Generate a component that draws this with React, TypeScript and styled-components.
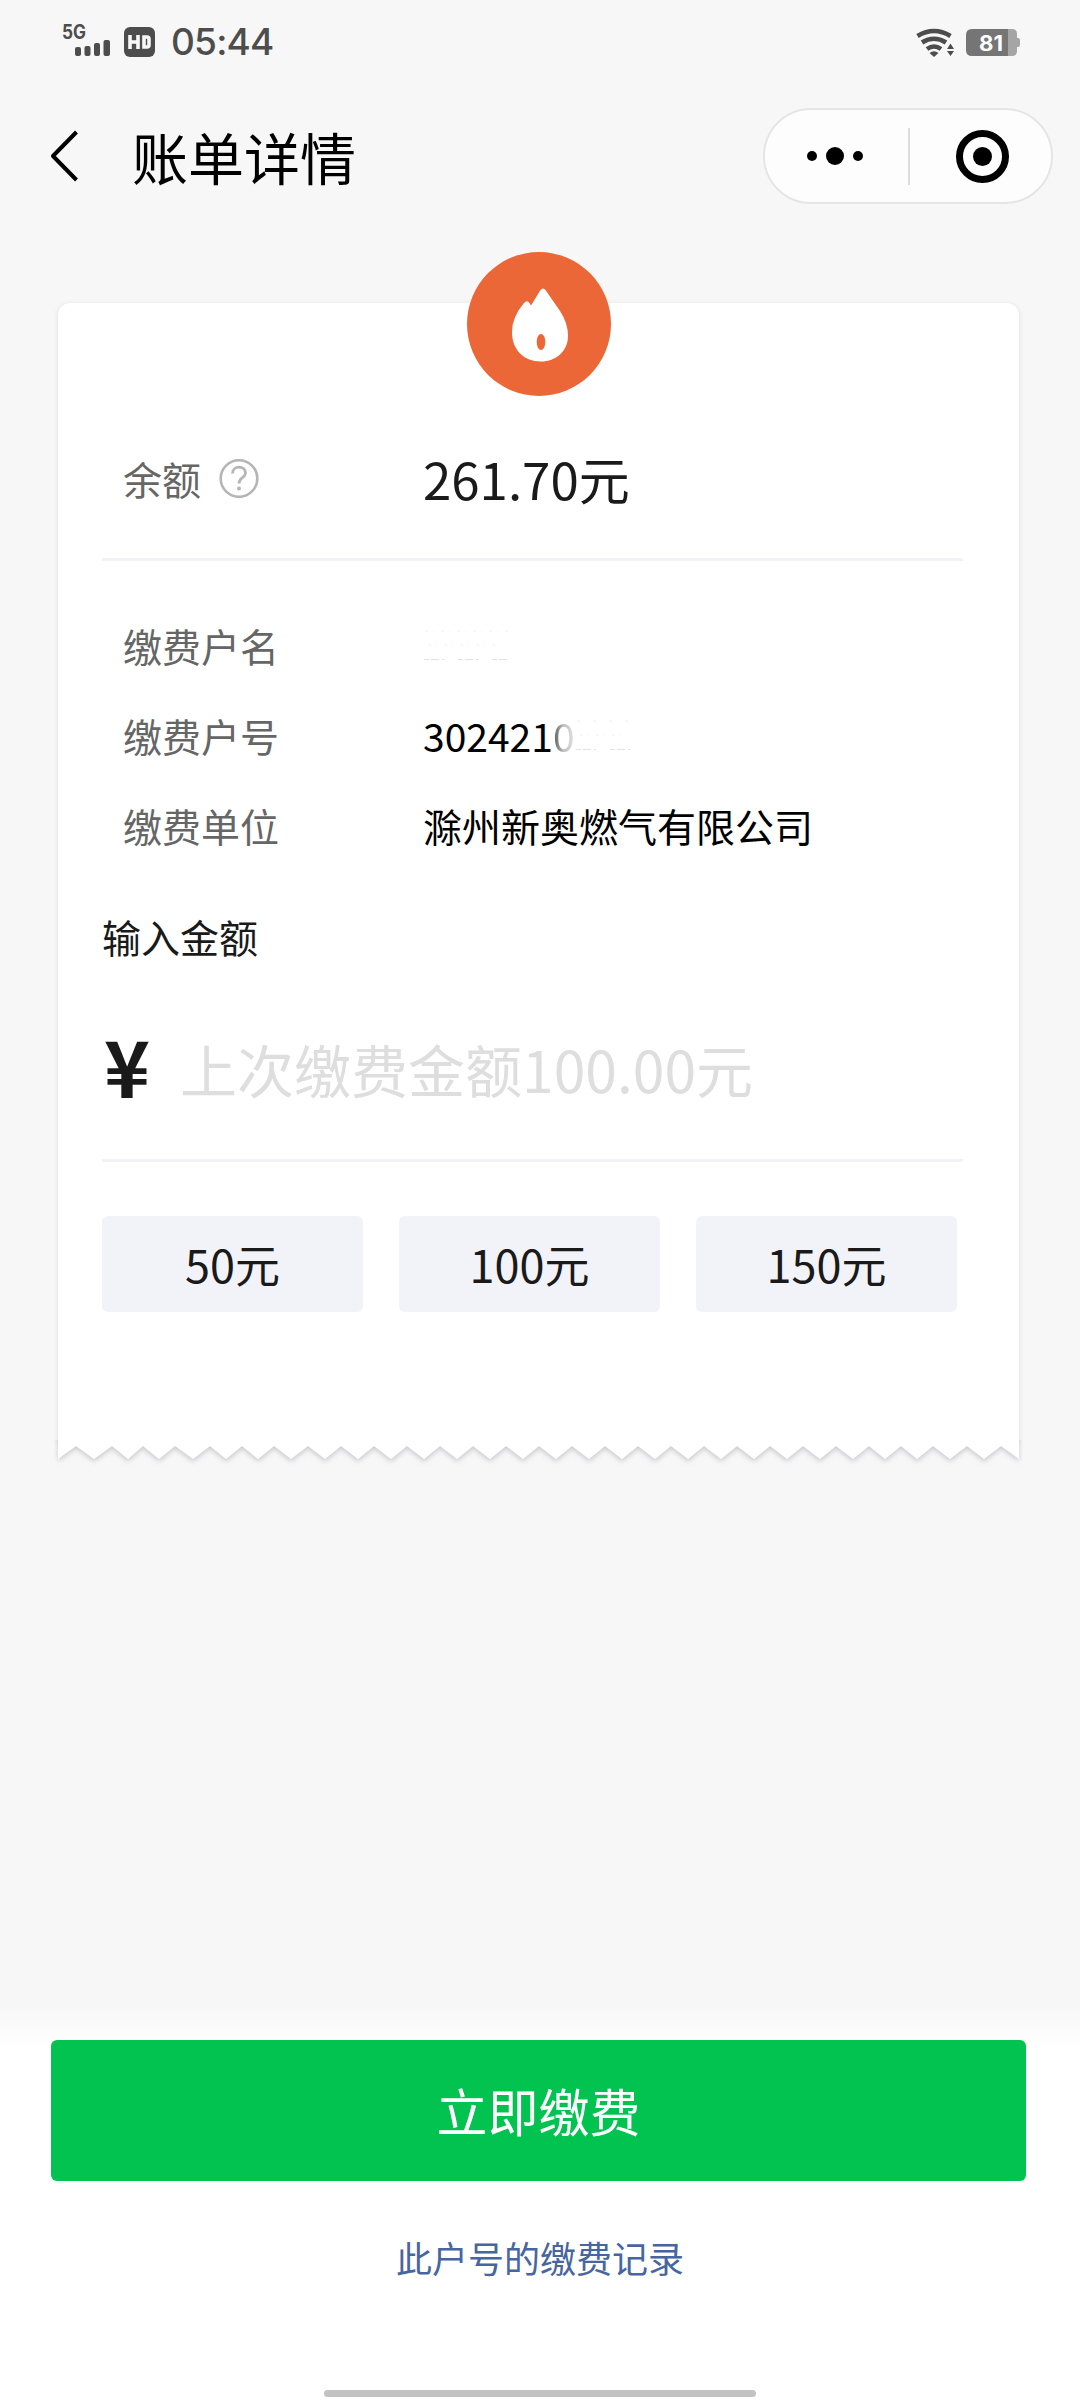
import React from "react";
import styled, { createGlobalStyle } from "styled-components";

const GlobalStyle = createGlobalStyle`
  * { box-sizing: border-box; }
  html, body { margin: 0; padding: 0; background: #f7f7f7; }
  body { font-family: "Noto Sans CJK SC", sans-serif; color: #1a1a1a; }
  button { font: inherit; border: 0; padding: 0; margin: 0; cursor: pointer; }
`;

const Screen = styled.div`
  width: 1080px;
  height: 2400px;
  display: flex;
  flex-direction: column;
  background: #f7f7f7;
  overflow: hidden;
`;

const StatusBar = styled.header`
  height: 84px;
  flex: none;
  display: flex;
  justify-content: space-between;
  padding: 0 60px 0 62px;
`;

const StatusSide = styled.div`
  display: flex;
  align-items: flex-start;
`;

const Clock = styled.span`
  margin-left: 15px;
  padding-top: 18px;
  font: 500 37px/48px Inter, sans-serif;
  letter-spacing: -0.8px;
  color: #4d4d4d;
`;

const NavBar = styled.nav`
  height: 144px;
  flex: none;
  display: flex;
  align-items: center;
  padding: 0 27px 0 48px;
`;

const BackButton = styled.button`
  width: 32px;
  height: 56px;
  background: none;
`;

const Title = styled.h1`
  margin: 0 0 0 52px;
  flex: 1;
  font-size: 56px;
  line-height: 72px;
  font-weight: 400;
  color: #000;
`;

const Capsule = styled.div`
  width: 290px;
  height: 96px;
  border: 2px solid #e5e5e5;
  border-radius: 48px;
  background: #fdfdfd;
  display: flex;
  align-items: center;
`;

const CapsuleDivider = styled.span`
  width: 2px;
  height: 57px;
  background: #dcdcdc;
`;

const CapsuleButton = styled.button<{ $width: number; $inset?: number }>`
  width: ${(p) => p.$width}px;
  height: 92px;
  padding-right: ${(p) => p.$inset ?? 0}px;
  background: none;
  display: flex;
  align-items: center;
  justify-content: center;
`;

const Main = styled.main`
  flex: 1;
  padding: 75px 61px 0 58px;
`;

const Receipt = styled.section`
  position: relative;
  height: 1139px;
  padding: 0 56px 0 44px;
  background: #fff;
  border-radius: 12px 12px 0 0;
  box-shadow: 0 1px 4px rgba(190, 192, 215, 0.5);
  display: flex;
  flex-direction: column;
`;

const TornEdge = styled.svg`
  position: absolute;
  left: -4px;
  top: 1137px;
  width: 969px;
  height: 30px;
  overflow: hidden;
`;

const Badge = styled.div`
  position: absolute;
  left: 409px;
  top: -51px;
  width: 144px;
  height: 144px;
`;

const BalanceRow = styled.div`
  height: 258px;
  padding: 135px 0 0 21px;
  border-bottom: 3px solid #f2f3f8;
  display: flex;
  flex: none;
`;

const BalanceLabel = styled.div`
  width: 300px;
  height: 80px;
  display: flex;
  align-items: center;
  gap: 18px;
  font-size: 39px;
  color: #666;
`;

const Balance = styled.div`
  font-size: 51px;
  line-height: 80px;
`;

const Details = styled.dl`
  margin: 0;
  padding: 39px 0 0 21px;
  display: flex;
  flex-direction: column;
`;

const DetailRow = styled.div`
  display: flex;
  height: 90px;
  align-items: center;
  font-size: 39px;
`;

const DetailLabel = styled.dt`
  width: 300px;
  color: #666;
`;

const DetailValue = styled.dd`
  margin: 0;
  color: #000;
  white-space: nowrap;
  display: flex;
  align-items: center;
`;

const Faded = styled.span`
  color: transparent;
  background: linear-gradient(90deg, #555 0%, #bbb 45%, #e4e4e4 100%);
  background-clip: text;
  -webkit-background-clip: text;
`;

const AmountTitle = styled.h2`
  margin: 36px 0 0;
  font-size: 39px;
  line-height: 60px;
  font-weight: 400;
`;

const AmountField = styled.div`
  height: 196px;
  padding-top: 10px;
  border-bottom: 3px solid #f2f3f8;
  display: flex;
  align-items: center;
  flex: none;
`;

const Currency = styled.span`
  width: 78px;
  padding: 0 0 8px 2px;
  font-size: 78px;
  line-height: 96px;
  font-weight: 700;
`;

const Placeholder = styled.span`
  font-size: 57px;
  line-height: 84px;
  color: #dedede;
  white-space: nowrap;
`;

const Presets = styled.div`
  margin-top: 54px;
  display: grid;
  grid-template-columns: repeat(3, 261px);
  column-gap: 36px;
`;

const Preset = styled.button`
  && { font-size: 45px; line-height: 96px; }
  height: 96px;
  color: #1a1a1a;
  background: #f2f3f8;
  border-radius: 6px;
`;

const Footer = styled.footer`
  height: 420px;
  flex: none;
  padding: 60px 54px 0 51px;
  background: linear-gradient(#f7f7f7 0, #f7f7f7 25px, #fff 72px);
  display: flex;
  flex-direction: column;
  align-items: center;
`;

const PayButton = styled.button`
  && { font-size: 51px; line-height: 141px; }
  width: 100%;
  height: 141px;
  flex: none;
  color: #fff;
  background: #02c250;
  border-radius: 6px;
`;

const HistoryLink = styled.a`
  margin: 49px 0 0 3px;
  font-size: 36px;
  line-height: 54px;
  color: #4766a0;
`;

const HomeIndicator = styled.span`
  margin: 106px 0 0 3px;
  width: 432px;
  height: 7px;
  flex: none;
  border-radius: 4px;
  background: #c2c2c2;
`;

const details = [
  { label: "缴费户名", value: "", faded: "", smudge: 92 },
  { label: "缴费户号", value: "302421", faded: "0", smudge: 66 },
  { label: "缴费单位", value: "滁州新奥燃气有限公司", faded: "", smudge: 0 },
];

const toothPeaks = [76, 112, 143, 175, 210, 242, 274, 308, 341, 374, 407, 440, 473, 506, 539, 572, 605, 638, 671, 704, 737, 770, 803, 836, 869, 901, 933, 967, 1001];
const toothPoints = toothPeaks
  .map((x, i) => {
    const next = toothPeaks[i + 1] ?? 1037;
    const valley = Math.min(1019, Math.round((x + next) / 2));
    return `${x - 54},6 ${valley - 54},19`;
  })
  .join(" ");

function SignalIcon() {
  return (
    <svg width="94" height="60" viewBox="62 0 94 60" fill="#4d4d4d">
      <text x="62" y="39" fontFamily="Inter, sans-serif" fontWeight="700" fontSize="19.500" textLength="24" lengthAdjust="spacingAndGlyphs">5G</text>
      <rect x="75" y="47" width="6" height="9" rx="2" />
      <rect x="84.500" y="46" width="6" height="10" rx="2" />
      <rect x="94" y="43" width="6" height="13" rx="2" />
      <rect x="103.500" y="40" width="6.500" height="16" rx="2" />
      <rect x="124" y="27" width="31" height="30" rx="6" />
      <path d="M130 35v14M138 35v14M130 42h8M144 37h3q2 0 2 2v6q0 2-2 2h-3z" fill="none" stroke="#f7f7f7" strokeWidth="3.600" />
    </svg>
  );
}

function WifiBatteryIcon() {
  return (
    <svg width="105" height="60" viewBox="915 0 105 60">
      <g fill="none" stroke="#4d4d4d" strokeWidth="4.600">
        <path d="M917.500 36Q934 26 950.500 36" />
        <path d="M922 42.500Q934 35 946 42.500" />
        <path d="M927 49Q934 44 941 49" />
      </g>
      <path d="M929.500 53Q934 49.500 938.500 53L934 57Z" fill="#4d4d4d" />
      <path d="M947 49l3.500-5.500 3.500 5.500zM947 51h7l-3.500 5z" fill="#4d4d4d" />
      <path d="M1008 29h4q5 0 5 5v4h1q2 0 2 2v5q0 2-2 2h-1v4q0 5-5 5h-4z" fill="#a5a5a5" />
      <path d="M1008 29v27h-36q-6 0-6-6v-15q0-6 6-6z" fill="#757575" />
      <text x="979" y="50.500" fontFamily="Inter, sans-serif" fontWeight="700" fontSize="21" textLength="24" lengthAdjust="spacingAndGlyphs" fill="#fff">81</text>
    </svg>
  );
}

/* Faint specks left where a value has been wiped out. */
function Smudge({ width }: { width: number }) {
  return (
    <svg width={width} height="32" viewBox={`0 0 ${width} 32`} fill="none" strokeWidth="1">
      <path d={`M2 2H${width - 4}M5 16H${width - 20}`} stroke="#f2f2f2" strokeDasharray="3 5 1 7" />
      <path d={`M1 30.500H${width - 6}`} stroke="#e2e2e2" strokeDasharray="5 2 8 3 2 14" />
    </svg>
  );
}

export default function App() {
  return (
    <>
      <GlobalStyle />
      <Screen>
        <StatusBar>
          <StatusSide>
            <SignalIcon />
            <Clock>05:44</Clock>
          </StatusSide>
          <StatusSide>
            <WifiBatteryIcon />
          </StatusSide>
        </StatusBar>

        <NavBar>
          <BackButton>
            <svg width="32" height="56" viewBox="0 0 32 56" fill="none" stroke="#000" strokeWidth="4">
              <path d="M28.500 4L5 28L28.500 52" strokeLinejoin="round" />
            </svg>
          </BackButton>
          <Title>账单详情</Title>
          <Capsule>
            <CapsuleButton $width={143} $inset={3}>
              <svg width="56" height="18" viewBox="0 0 56 18">
                <circle cx="5" cy="9" r="5" />
                <circle cx="28" cy="9" r="9" />
                <circle cx="51" cy="9" r="5" />
              </svg>
            </CapsuleButton>
            <CapsuleDivider />
            <CapsuleButton $width={141}>
              <svg width="60" height="56" viewBox="0 0 60 56">
                <circle cx="31.500" cy="28.500" r="23" fill="none" stroke="#000" strokeWidth="7" />
                <circle cx="31.500" cy="28.500" r="9.500" />
              </svg>
            </CapsuleButton>
          </Capsule>
        </NavBar>

        <Main>
          <Receipt>
            <TornEdge viewBox="0 0 969 30">
              <defs>
                <filter id="edge" x="-2%" y="-50%" width="104%" height="250%">
                  <feDropShadow dx="0" dy="2.500" stdDeviation="2.600" floodColor="#9c9eac" floodOpacity="0.5" />
                </filter>
              </defs>
              <path d="M0 5H969V30H0Z" fill="#f7f7f7" />
              <polygon points={`4,-10 4,19 ${toothPoints} 965,-10`} fill="#fff" filter="url(#edge)" />
            </TornEdge>
            <Badge>
              <svg width="144" height="144" viewBox="467 252 144 144">
                <circle cx="539" cy="324" r="72" fill="#ec6737" />
                <path d="M531 305.500L540.500 290Q543 287 545.500 290L560 311Q568 323 568 336C568 351 556 361.500 541 361.500C524 361.500 512 350 512 332Q512 317 524 303Q527 300 529 302.500Z" fill="#fff" />
                <ellipse cx="541" cy="342" rx="4.300" ry="8" fill="#ec6737" />
              </svg>
            </Badge>

            <BalanceRow>
              <BalanceLabel>
                余额
                <svg width="40" height="40" viewBox="0 0 40 40" fill="none" stroke="#b5b5b5">
                  <circle cx="20" cy="20.500" r="18.300" strokeWidth="2.600" />
                  <path d="M13.500 15.500C13.500 7 26.500 7 26.500 15C26.500 20 20 19.500 20 25.500" strokeWidth="2.800" />
                  <circle cx="20" cy="30.500" r="2" fill="#b5b5b5" stroke="none" />
                </svg>
              </BalanceLabel>
              <Balance>261.70元</Balance>
            </BalanceRow>

            <Details>
              {details.map((d) => (
                <DetailRow key={d.label}>
                  <DetailLabel>{d.label}</DetailLabel>
                  <DetailValue>
                    {d.value}
                    {d.faded && <Faded>{d.faded}</Faded>}
                    {d.smudge > 0 && <Smudge width={d.smudge} />}
                  </DetailValue>
                </DetailRow>
              ))}
            </Details>

            <AmountTitle>输入金额</AmountTitle>
            <AmountField>
              <Currency>¥</Currency>
              <Placeholder>上次缴费金额100.00元</Placeholder>
            </AmountField>
            <Presets>
              <Preset>50元</Preset>
              <Preset>100元</Preset>
              <Preset>150元</Preset>
            </Presets>
          </Receipt>
        </Main>

        <Footer>
          <PayButton>立即缴费</PayButton>
          <HistoryLink>此户号的缴费记录</HistoryLink>
          <HomeIndicator />
        </Footer>
      </Screen>
    </>
  );
}
